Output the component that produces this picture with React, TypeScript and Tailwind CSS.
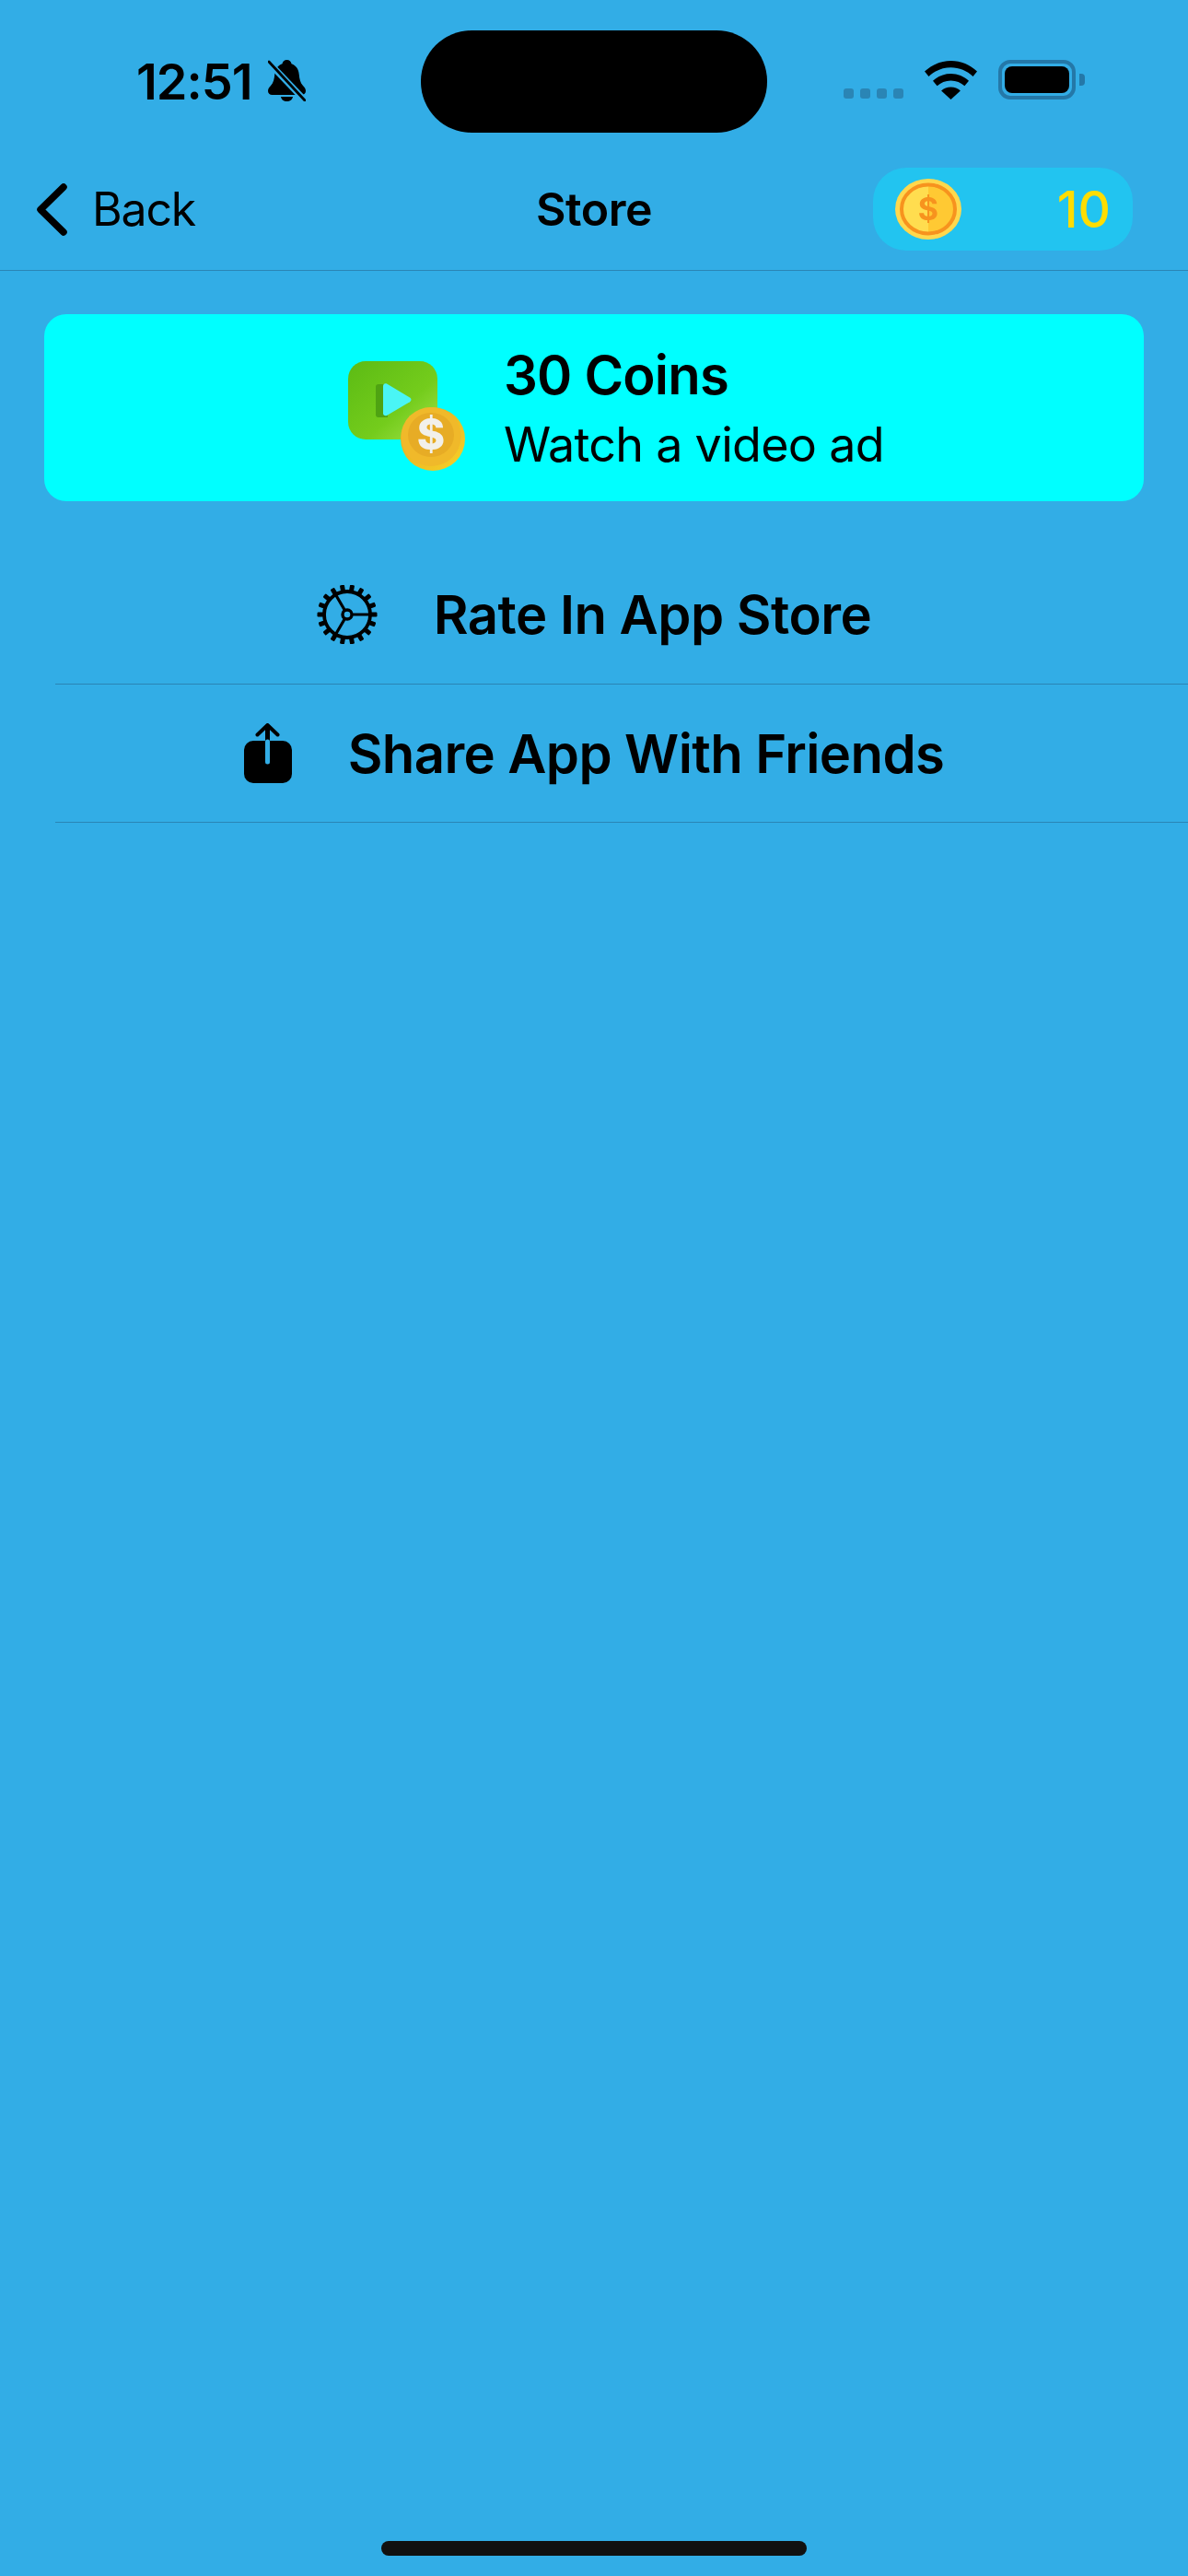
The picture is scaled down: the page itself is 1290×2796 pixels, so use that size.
const teeth = Array.from({ length: 18 }, (_, i) => 10 + i * 20)

function BellSlash() {
  return (
    <svg width="41" height="45" viewBox="0 0 41 45" className="shrink-0">
      <path
        d="M20.500 0c2.800 0 4.600 1.900 5 4.300 5 1.700 7.700 5.900 8.200 11.200.5 5.500 1.300 9.300 4.300 12.600 1.500 1.700 3 3.300 3 5.600 0 2.600-1.800 4.300-4.600 4.300H4.600C1.800 38 0 36.300 0 33.700c0-2.300 1.500-3.900 3-5.600 3-3.300 3.800-7.100 4.300-12.600C7.800 10.200 10.500 6 15.500 4.300 15.900 1.900 17.700 0 20.500 0zM14 40h13c-.4 3-3.100 5-6.500 5s-6.100-2-6.500-5z"
        fill="#000"
      />
      <path d="M-1 1 42 46" stroke="#32ADE6" strokeWidth="7" />
      <path d="M1 2 40 44" stroke="#000" strokeWidth="2.800" strokeLinecap="round" />
    </svg>
  )
}

function Wifi() {
  return (
    <svg width="57" height="42" viewBox="0 0 57 42" className="shrink-0">
      <path d="M28.500 0C17.500 0 7.500 4.300 0 11.500l4.500 5.400C11 10.800 19.300 7.200 28.500 7.200s17.500 3.600 24 9.700l4.500-5.400C49.500 4.300 39.500 0 28.500 0z" />
      <path d="M28.500 14c-7.500 0-14.300 2.900-19.500 7.700l4.600 5.500c3.900-3.600 9.100-5.800 14.900-5.800s11 2.200 14.900 5.800l4.600-5.500C42.800 16.900 36 14 28.500 14z" />
      <path d="M28.500 28.500c-4 0-7.600 1.500-10.400 4L28.500 42l10.400-9.500c-2.800-2.500-6.400-4-10.400-4z" />
    </svg>
  )
}

function Gear() {
  return (
    <svg width="66" height="64" viewBox="0 0 66 64" className="shrink-0">
      <g transform="translate(33 32)" stroke="#000" fill="none">
        <circle r="25" strokeWidth="3.800" />
        {teeth.map((a) => (
          <rect key={a} x="-2.500" y="-32.500" width="5" height="9" rx="1.200" fill="#000" stroke="none" transform={`rotate(${a})`} />
        ))}
        <circle r="5" strokeWidth="3.400" />
        <path d="M6 0H25M-3 -5.200 -12.500 -21.500M-3 5.200 -12.500 21.500" strokeWidth="3.200" />
      </g>
    </svg>
  )
}

function ShareIcon() {
  return (
    <svg width="52" height="65" viewBox="0 0 52 65" className="shrink-0">
      <rect x="0" y="19" width="52" height="46" rx="10" fill="#000" />
      <path d="M25.500 20V3" stroke="#000" strokeWidth="5" />
      <path d="M25.500 42V20" stroke="#32ADE6" strokeWidth="5" strokeLinecap="round" />
      <path d="M14.500 12.500 25.500 2l11 10.500" stroke="#000" strokeWidth="4" fill="none" strokeLinecap="round" strokeLinejoin="round" />
    </svg>
  )
}

function CoinSmall() {
  return (
    <svg width="72" height="66" viewBox="0 0 72 66" className="shrink-0 blur-[0.5px]">
      <defs>
        <linearGradient id="coinFace" x1="0" x2="1" y1="0" y2="0">
          <stop offset="0.5" stopColor="#FFDD4F" />
          <stop offset="0.5" stopColor="#FFC933" />
        </linearGradient>
      </defs>
      <ellipse cx="36" cy="33" rx="36" ry="33" fill="#FFD84D" />
      <ellipse cx="36" cy="33" rx="29" ry="26.500" fill="url(#coinFace)" stroke="#F7931E" strokeWidth="4" />
      <text x="36" y="45" textAnchor="middle" fontFamily="Inter, sans-serif" fontWeight="700" fontSize="34" fill="#F7931E">$</text>
    </svg>
  )
}

function VideoCoin() {
  return (
    <svg width="127" height="119" viewBox="0 0 127 119" className="shrink-0 blur-[0.4px]">
      <defs>
        <linearGradient id="greenBox" x1="0" x2="1" y1="0" y2="1">
          <stop offset="0" stopColor="#5CBB14" />
          <stop offset="0.6" stopColor="#74CC1C" />
          <stop offset="1" stopColor="#A2E24A" />
        </linearGradient>
        <linearGradient id="goldRim" x1="0" x2="1" y1="0" y2="1">
          <stop offset="0" stopColor="#E2A820" />
          <stop offset="1" stopColor="#F7D128" />
        </linearGradient>
      </defs>
      <rect x="0" y="0" width="97" height="85" rx="19" fill="url(#greenBox)" />
      <path d="M33 25h10v36H33c-2 0-3-1-3-3V28c0-2 1-3 3-3z" fill="#4FA312" />
      <path d="M38 27c0-2 2-3.500 4-2.500l25 15c2 1.300 2 3.400 0 4.700l-25 14.800c-2 1-4-.4-4-2.500z" fill="#4AF5F5" />
      <ellipse cx="92" cy="84.500" rx="35" ry="34.500" fill="url(#goldRim)" />
      <ellipse cx="90" cy="82" rx="32.500" ry="32" fill="#F0B92A" />
      <ellipse cx="90" cy="80" rx="25" ry="24" fill="#E7AC25" />
      <text x="90" y="96" textAnchor="middle" fontFamily="Inter, sans-serif" fontWeight="800" fontSize="46" fill="#F2F0EA">$</text>
    </svg>
  )
}

export default function App() {
  return (
    <div className="w-[1290px] h-[2796px] bg-[#32ADE6] flex flex-col text-black font-['Inter',sans-serif]">
      <div className="h-[164px] flex items-start">
        <div className="w-[457px] pl-[148px] pt-[59px] flex items-start gap-[17px]">
          <span className="text-[54px] leading-[60px] font-semibold tracking-[-1px]">12:51</span>
          <div className="pt-[6px]"><BellSlash /></div>
        </div>
        <div className="w-[376px] h-[111px] mt-[33px] rounded-[55px] bg-black" />
        <div className="flex-1 pl-[83px] pt-[65px] flex items-end">
          <div className="flex gap-[7px] mb-[1px]">
            <div className="w-[11px] h-[11px] rounded-[3px] bg-[#2A85B5]" />
            <div className="w-[11px] h-[11px] rounded-[3px] bg-[#2A85B5]" />
            <div className="w-[11px] h-[11px] rounded-[3px] bg-[#2A85B5]" />
            <div className="w-[11px] h-[11px] rounded-[3px] bg-[#2A85B5]" />
          </div>
          <div className="ml-[23px]"><Wifi /></div>
          <div className="ml-[23px] flex items-center">
            <div className="w-[84px] h-[43px] rounded-[13px] border-[4px] border-[#2478A8] p-[3px]">
              <div className="w-full h-full rounded-[8px] bg-black" />
            </div>
            <div className="ml-[4px] w-[6px] h-[13px] rounded-r-[4px] bg-[#2478A8]" />
          </div>
        </div>
      </div>

      <div className="h-[130px] border-b border-[#2A85B5] grid grid-cols-3 items-center pb-[3px]">
        <div className="pl-[40px] flex items-center gap-[27px]">
          <svg width="33" height="57" viewBox="0 0 33 57" fill="none" className="shrink-0">
            <path d="M29 4 4 28.500 29 53" stroke="#000" strokeWidth="7.500" strokeLinecap="round" strokeLinejoin="round" />
          </svg>
          <span className="text-[50px] leading-[60px] tracking-[-1.2px]">Back</span>
        </div>
        <div className="text-center text-[50px] leading-[60px] font-semibold tracking-[-0.5px]">Store</div>
        <div className="flex justify-end pr-[60px]">
          <div className="w-[282px] h-[90px] rounded-[36px] bg-[#22C4F0] pl-[24px] pr-[24px] flex items-center justify-between">
            <CoinSmall />
            <span className="text-[55px] leading-[60px] font-medium text-[#FFDD00]">10</span>
          </div>
        </div>
      </div>

      <div className="mt-[47px] mx-[48px] h-[203px] rounded-[24px] bg-[#00FFFF] pl-[330px] flex items-center gap-[42px]">
        <div className="mt-[18px]"><VideoCoin /></div>
        <div className="flex flex-col gap-[9px]">
          <span className="text-[58px] leading-[72px] font-semibold tracking-[-0.8px]">30 Coins</span>
          <span className="text-[52px] leading-[62px] tracking-[-0.7px]">Watch a video ad</span>
        </div>
      </div>

      <div className="mt-[48px] ml-[60px] h-[151px] border-b border-[#2A85B5] pr-[60px] flex items-center justify-center gap-[61px]">
        <Gear />
        <span className="text-[58px] leading-[70px] font-semibold tracking-[-0.5px]">Rate In App Store</span>
      </div>
      <div className="ml-[60px] h-[150px] border-b border-[#2A85B5] pr-[60px] flex items-center justify-center gap-[61px]">
        <ShareIcon />
        <span className="text-[58px] leading-[70px] font-semibold tracking-[-0.6px]">Share App With Friends</span>
      </div>

      <div className="mt-auto mb-[22px] mx-auto w-[462px] h-[16px] rounded-full bg-[#111]" />
    </div>
  )
}
